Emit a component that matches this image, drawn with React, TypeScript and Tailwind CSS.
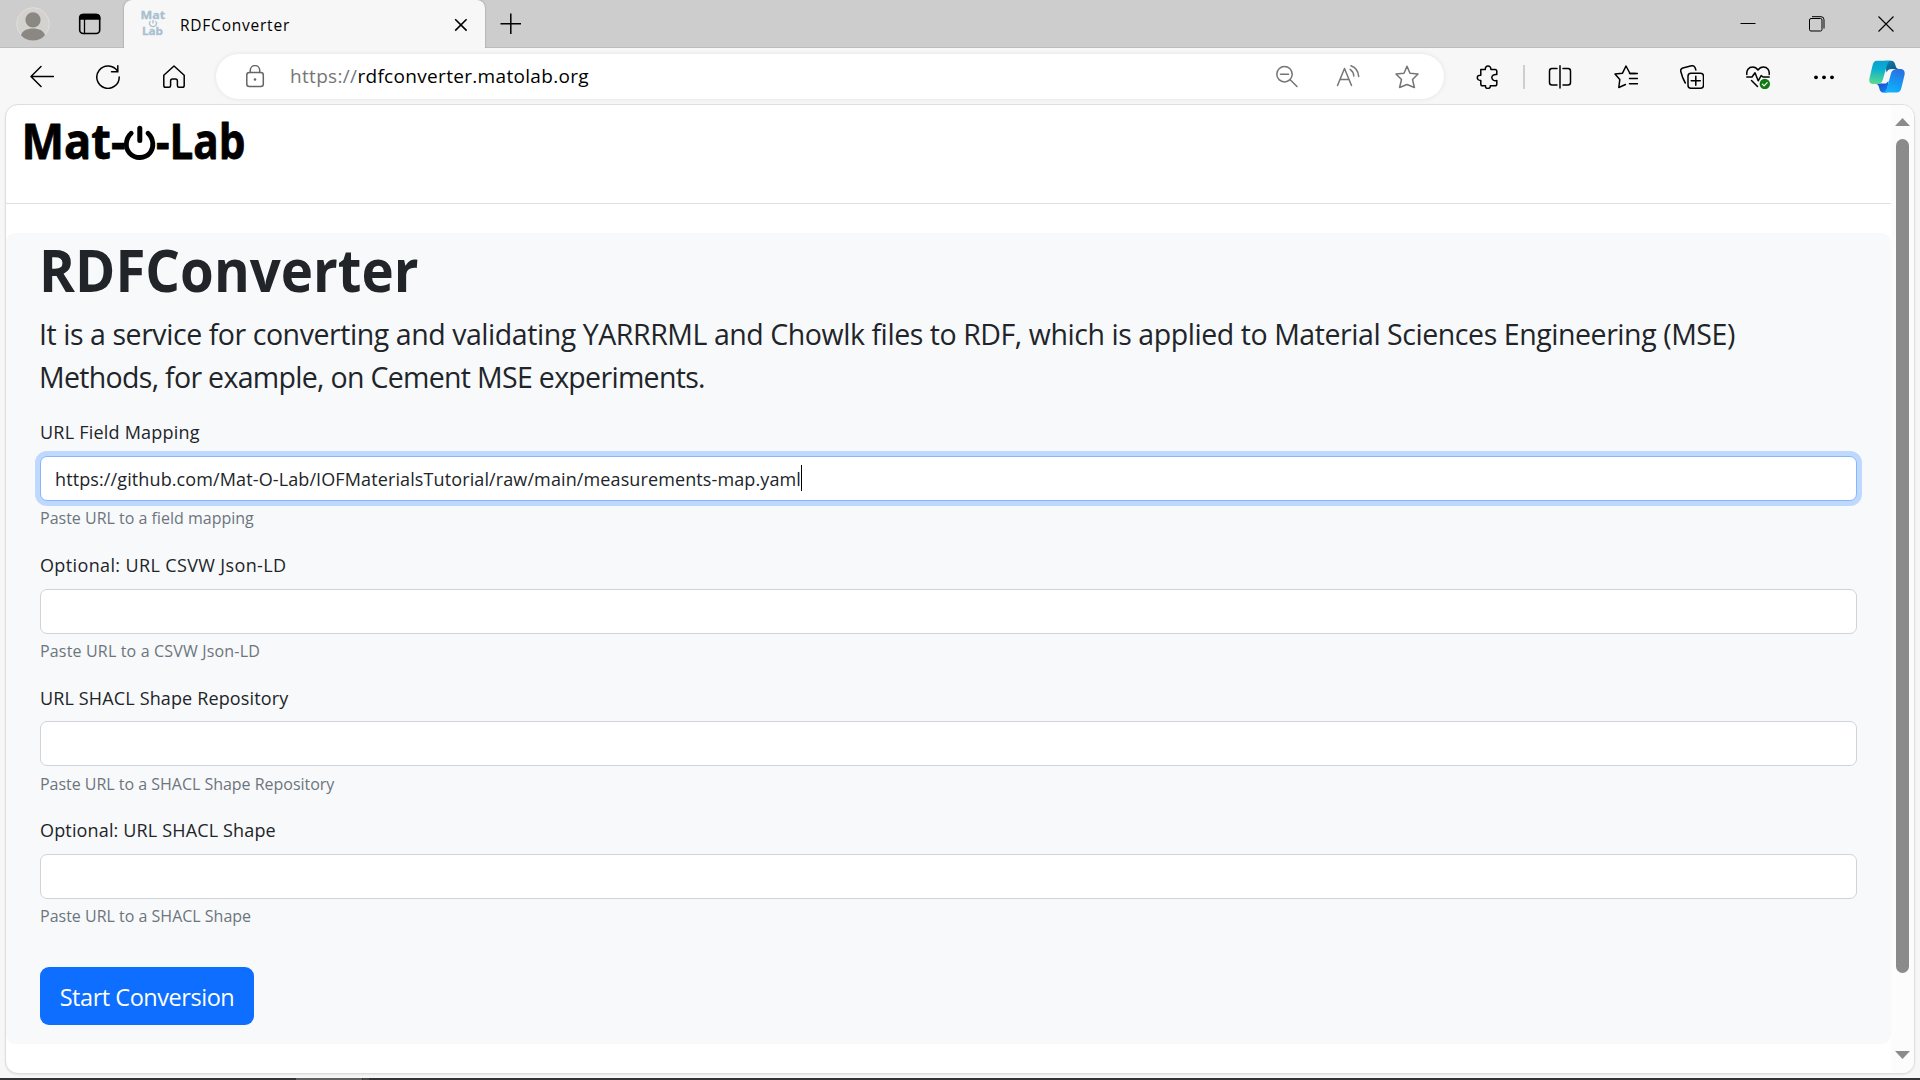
import type { ReactNode } from "react";

function Icon({ children, className = "" }: { children: ReactNode; className?: string }) {
  return (
    <svg
      width="24"
      height="24"
      viewBox="0 0 24 24"
      fill="none"
      stroke="currentColor"
      strokeWidth="1.5"
      strokeLinecap="round"
      strokeLinejoin="round"
      className={"shrink-0 " + className}
    >
      {children}
    </svg>
  );
}

function Cell({ children, className = "w-[66px]" }: { children: ReactNode; className?: string }) {
  return <button className={"flex h-full shrink-0 items-center justify-center " + className}>{children}</button>;
}

function Favicon() {
  return (
    <svg width="26" height="26" viewBox="0 0 26 26" className="shrink-0 overflow-visible" fill="#a9c0cf">
      <text x="0.5" y="8.4" fontSize="11" fontWeight="700" fontFamily="Open Sans" stroke="#a9c0cf" strokeWidth="0.3" textLength="24.5" lengthAdjust="spacingAndGlyphs">Mat</text>
      <text x="2" y="24.4" fontSize="11" fontWeight="700" fontFamily="Open Sans" stroke="#a9c0cf" strokeWidth="0.3" textLength="21" lengthAdjust="spacingAndGlyphs">Lab</text>
      <path d="M10.6 10.2a3.6 3 0 1 0 4.8 0M13 9v3.6" fill="none" stroke="#a9c0cf" strokeWidth="1.3" />
    </svg>
  );
}

function Logo() {
  return (
    <svg width="226" height="60" viewBox="0 0 226 60" className="block overflow-visible">
      <g fontFamily="Open Sans" fontWeight="700" fontSize="48" fill="#000" stroke="#000" strokeWidth="0.8" strokeLinejoin="round">
        <text x="1.5" y="46.2" textLength="104" lengthAdjust="spacingAndGlyphs">Mat-</text>
        <text x="136" y="46.2" textLength="89.5" lengthAdjust="spacingAndGlyphs">-Lab</text>
      </g>
      <path d="M111.2 20.2C105.5 25.5 104.8 34.5 109.3 39.8C115 46.2 125.2 46 130.3 39.5C134.3 34.2 133.6 25.5 128 20.2" fill="none" stroke="#000" strokeWidth="4.8" strokeLinecap="round" />
      <path d="M119.8 15.3V27.5" stroke="#000" strokeWidth="5" strokeLinecap="round" />
    </svg>
  );
}

function Copilot() {
  return (
    <svg width="36" height="33" viewBox="0 0 36 33" className="shrink-0">
      <defs>
        <linearGradient id="teal" x1="0.4" y1="0" x2="0.3" y2="1">
          <stop offset="0" stopColor="#08a3cf" />
          <stop offset="0.35" stopColor="#0aaed0" />
          <stop offset="1" stopColor="#5bdc8c" />
        </linearGradient>
        <linearGradient id="azure" x1="0.7" y1="0" x2="0.3" y2="1">
          <stop offset="0" stopColor="#2a6fe0" />
          <stop offset="0.6" stopColor="#149cf5" />
          <stop offset="1" stopColor="#12b4fb" />
        </linearGradient>
        <linearGradient id="deep" x1="0" y1="0" x2="1" y2="1">
          <stop offset="0" stopColor="#0b85b8" />
          <stop offset="1" stopColor="#134a70" />
        </linearGradient>
        <linearGradient id="navy" x1="0" y1="0" x2="0.6" y2="1">
          <stop offset="0" stopColor="#1f3fc4" />
          <stop offset="1" stopColor="#1679ea" />
        </linearGradient>
      </defs>
      <path d="M16 .8H22C25 .8 25.8 3 26.5 5.5C27 7.6 28 9 30 9H23C20 9 18.5 10 17.5 12.5Z" fill="url(#deep)" />
      <path d="M9 23.5H17L19.5 21L18 32.5H14C11.5 32.5 10.7 30 10.2 28C9.6 25.6 9 24.2 6.5 23.8Z" fill="url(#navy)" />
      <path d="M8 .8H21.5C19 1.5 18.3 4 17.6 6.6L14.2 18.5C13.2 22 12.2 24 8.5 24H4C.8 24-.2 21.4.5 18L3.5 5.5C4.3 2.4 5.2.8 8 .8Z" fill="url(#teal)" />
      <path d="M28.5 9H31.5C35 9 36.2 11.6 35.5 15L32.5 27.5C31.7 30.8 30.5 32.5 27.5 32.5H13.8C16.5 32 17.5 29.5 18.3 26.8L21.7 14.5C22.6 11.2 24 9 28.5 9Z" fill="url(#azure)" />
    </svg>
  );
}

function TabBar() {
  return (
    <div className="flex h-12 shrink-0 items-stretch bg-[#cdcdcd]">
      <div className="flex w-[124px] items-center border-b border-[#bdbdbd] pl-4">
        <svg width="34" height="34" viewBox="0 0 34 34" className="shrink-0">
          <circle cx="17" cy="17" r="16.3" fill="#d3d2cf" stroke="#e0dfdb" strokeWidth="1" />
          <circle cx="17" cy="12.8" r="7.6" fill="#8b8883" />
          <path d="M5 28.2C6.5 23.5 11 21.5 17 21.5S27.5 23.5 29 28.2A16 16 0 0 1 5 28.2Z" fill="#8b8883" />
        </svg>
        <Icon className="ml-[27px]">
          <rect x="2.7" y="2.5" width="20" height="19" rx="3.5" strokeWidth="1.6" />
          <path d="M2.7 7V6Q2.7 2.5 6.2 2.5H19.2Q22.7 2.5 22.7 6V7Z" fill="currentColor" />
          <path d="M7.5 7V21.5" strokeWidth="1.3" />
        </Icon>
      </div>
      <div className="flex w-[361px] items-center rounded-t-[8px] bg-[#f7f7f7] pr-[12px] pl-[16px] shadow-[0_0_2px_rgba(0,0,0,0.35)] [clip-path:inset(-3px_-3px_0_-3px)]">
        <Favicon />
        <span className="ml-[14px] pt-px text-[15.5px] leading-5 tracking-[0.77px]">RDFConverter</span>
        <svg width="24" height="24" viewBox="0 0 24 24" className="ml-auto shrink-0" fill="none" stroke="#000" strokeWidth="1.6">
          <path d="M6.2 7.2 17.6 18.6M17.6 7.2 6.2 18.6" />
        </svg>
      </div>
      <div className="flex flex-1 items-center border-b border-[#bdbdbd] pl-[14px]">
        <svg width="24" height="24" viewBox="0 0 24 24" fill="none" stroke="#000" strokeWidth="1.5">
          <path d="M11.8 1.5V22M1.5 11.8H22" />
        </svg>
        <div className="ml-auto flex items-center">
          <Cell className="w-[69px]">
            <svg width="16" height="16" stroke="#000"><path d="M.5 7.5H15.5" /></svg>
          </Cell>
          <Cell className="w-[69px]">
            <svg width="16" height="16" viewBox="0 0 16 16" fill="none" stroke="#000" strokeWidth="1">
              <rect x=".5" y="2.5" width="12.5" height="12.5" rx="1.5" />
              <path d="M3 .7H12Q15 .7 15 3.7V12.5" />
            </svg>
          </Cell>
          <Cell className="w-[69px]">
            <svg width="16" height="16" viewBox="0 0 16 16" fill="none" stroke="#000" strokeWidth="1.1"><path d="M.5.5 15.5 15.5M15.5.5.5 15.5" /></svg>
          </Cell>
        </div>
      </div>
    </div>
  );
}

function AddressBar() {
  return (
    <div className="flex h-[45px] w-[1228px] shrink-0 items-center rounded-full bg-white shadow-[0_0_5px_rgba(0,0,0,0.09)]">
      <Icon className="ml-[27px] text-[#666]">
        <rect x="3.8" y="7.5" width="16.5" height="14" rx="2.5" />
        <path d="M7.3 7.5V5.3a4.7 4.7 0 0 1 9.4 0V7.5" />
        <circle cx="12" cy="14.5" r="1.3" fill="currentColor" stroke="none" />
      </Icon>
      <span className="ml-[23px] text-[19px] leading-[45px] tracking-[0.32px] text-black">
        <span className="text-[#767676]">https://</span>rdfconverter.matolab.org
      </span>
      <div className="ml-auto flex h-full items-center pr-[7px] text-[#757575]">
        <Cell className="w-[60px]">
          <Icon>
            <circle cx="9.5" cy="9.2" r="7.7" />
            <path d="M5.5 9.2H13.5M15.2 14.8 22 21.5" />
          </Icon>
        </Cell>
        <Cell className="w-[60px]">
          <Icon className="ml-px">
            <path d="M1.5 20.5 8.5 3.5 15.5 20.5M4 14.5H13" />
            <path d="M14.2 4.3C16.3 5.8 17.6 8 17.8 11M15 .8C19.5 2.5 22.4 6.5 22.7 11.5" />
          </Icon>
        </Cell>
        <Cell className="w-[60px]">
          <Icon>
            <path d="M12 1.3 15 8.2 23 9 17.5 14.5 19.4 22.5 12 19.5 4.6 22.5 6.5 14.5 1 9 9 8.2Z" />
          </Icon>
        </Cell>
      </div>
    </div>
  );
}

function Toolbar() {
  return (
    <div className="flex h-[57px] shrink-0 items-center bg-[#f7f7f7] pl-[9px]">
      <Cell>
        <Icon><path d="M23.5 11.5H1M11 1.5 1 11.5 11 21.5" /></Icon>
      </Cell>
      <Cell>
        <Icon><path d="M21.5 6.2A11.2 11.2 0 1 0 23.2 12M21.8.8V6.8H15.5" strokeLinejoin="miter" /></Icon>
      </Cell>
      <Cell>
        <Icon><path d="M12 1 1.8 10.3V20.5Q1.8 22.3 3.5 22.3H7Q8.6 22.3 8.6 20.5V16Q8.6 14 10.5 14H13.5Q15.4 14 15.4 16V20.5Q15.4 22.3 17 22.3H20.5Q22.2 22.3 22.2 20.5V10.3Z" /></Icon>
      </Cell>
      <div className="ml-[9px]">
        <AddressBar />
      </div>
      <div className="flex h-full items-center pl-[11px] text-black">
        <Cell>
          <Icon>
            <path d="M4.8 4.4H9.3C9.1 2.2 10.3 1.1 12 1.1S15.1 2.2 14.9 4.4H19Q20.8 4.4 20.8 6.200V9.600C18 9.200 15.800 10.400 15.800 12.600S18 16 20.800 15.600V18.900Q20.800 20.700 19 20.700H14.300C14.500 22.400 13.500 23.400 11.800 23.400S9.300 22.400 9.500 20.700H6.500Q4.800 20.700 4.800 18.900V15.400C2.900 15.600 1.300 14.400 1.300 12.700S2.900 10 4.800 10.200Z" />
          </Icon>
        </Cell>
        <div className="mx-[2px] h-6 w-[2px] bg-[#cfcfcf]" />
        <Cell className="w-[65px]">
          <Icon>
            <path d="M9 3.5H4Q1.5 3.5 1.5 6V17.5Q1.5 20 4 20H9M15 3.5H20Q22.5 3.5 22.5 6V17.5Q22.5 20 20 20H15M12 .8V23" />
          </Icon>
        </Cell>
        <Cell className="w-[67px]">
          <Icon>
            <path d="M21.5 8.5H16L12 1 8.5 8.2 1 9 5.8 14.5 4.8 22.5 11.5 19.5" />
            <path d="M15.5 8.5H23.5M15.5 13.5H23.5M15.5 18.7H23.5" />
          </Icon>
        </Cell>
        <Cell>
          <Icon>
            <rect x="8" y="8.2" width="15.5" height="15" rx="3" />
            <path d="M15.8 11.2V20.3M11.2 15.7H20.3" />
            <path d="M5.3 18C3.8 15.5 1.5 9.5.8 6.5Q.2 3.8 2.8 3L11.5.8Q14 .3 15 2.5L15.9 5" />
          </Icon>
        </Cell>
        <Cell>
          <Icon>
            <path d="M.8 9.5C.3 5 3 2 6.5 2 9 2 10.7 3 12 5 13.3 3 15 2 17.5 2 21 2 23.7 5 23.2 9.5" />
            <path d="M.8 12H6L9 7.8 12.2 15.8 15.2 10.5 17 12H23.2M5.5 15.5 11.5 21.5" />
            <circle cx="18.8" cy="19" r="5.2" fill="#0f7b10" stroke="none" />
            <path d="M16.4 19.2 18.1 20.9 21.2 17.6" stroke="#fff" strokeWidth="1.2" />
          </Icon>
        </Cell>
        <Cell>
          <Icon>
            <g fill="currentColor" stroke="none">
              <circle cx="4" cy="12.3" r="1.9" />
              <circle cx="12" cy="12.3" r="1.9" />
              <circle cx="20" cy="12.3" r="1.9" />
            </g>
          </Icon>
        </Cell>
        <Cell className="w-[60px]">
          <Copilot />
        </Cell>
      </div>
    </div>
  );
}

type FieldData = {
  label: string;
  labelTracking: string;
  help: string;
  helpTracking: string;
  value?: string;
};

const fields: FieldData[] = [
  {
    label: "URL Field Mapping",
    labelTracking: "tracking-[0.22px]",
    help: "Paste URL to a field mapping",
    helpTracking: "tracking-[0px]",
    value: "https://github.com/Mat-O-Lab/IOFMaterialsTutorial/raw/main/measurements-map.yaml",
  },
  {
    label: "Optional: URL CSVW Json-LD",
    labelTracking: "tracking-[0.37px]",
    help: "Paste URL to a CSVW Json-LD",
    helpTracking: "tracking-[0.17px]",
  },
  {
    label: "URL SHACL Shape Repository",
    labelTracking: "tracking-[0.14px]",
    help: "Paste URL to a SHACL Shape Repository",
    helpTracking: "tracking-[-0.02px]",
  },
  {
    label: "Optional: URL SHACL Shape",
    labelTracking: "tracking-[0.15px]",
    help: "Paste URL to a SHACL Shape",
    helpTracking: "tracking-[0px]",
  },
];

function Field({ field }: { field: FieldData }) {
  const box = field.value
    ? "border-[#86b7fe] shadow-[0_0_0_5px_#bfd8fd]"
    : "border-[#ced4da]";
  return (
    <div className="h-[132.67px]">
      <label className={"block text-[18px] leading-[27px] " + field.labelTracking}>{field.label}</label>
      <div className={"mt-[9.6px] flex h-[45px] items-center rounded-[7px] border bg-white px-[14px] " + box}>
        {field.value && (
          <>
            <span className="pt-[2px] text-[18px] leading-[27px] tracking-[0.112px] whitespace-nowrap">{field.value}</span>
            <span className="h-[26px] w-px bg-black" />
          </>
        )}
      </div>
      <p className={"mt-[5.5px] text-[16px] leading-6 text-[#6c757d] " + field.helpTracking}>{field.help}</p>
    </div>
  );
}

function Scrollbar() {
  return (
    <div className="flex w-[23px] shrink-0 flex-col items-center bg-[#fcfcfc]">
      <svg width="15" height="8" viewBox="0 0 15 8" className="mt-[13px] shrink-0"><path d="M0 8 7.5 0 15 8Z" fill="#8b8b8b" /></svg>
      <div className="mt-[13px] h-[834px] w-[13px] shrink-0 rounded-full bg-[#8b8b8b]" />
      <svg width="15" height="8" viewBox="0 0 15 8" className="mt-auto mb-[14px] shrink-0"><path d="M0 0H15L7.5 8Z" fill="#8b8b8b" /></svg>
    </div>
  );
}

export default function App() {
  return (
    <div className="flex h-[1080px] w-[1920px] flex-col overflow-hidden bg-[#f7f7f7] font-['Open_Sans',sans-serif] text-black">
      <TabBar />
      <Toolbar />
      <div className="mx-[5px] -mt-px flex h-[970px] w-[1910px] shrink-0 overflow-hidden rounded-[13px] border border-[#dedede] bg-white shadow-[0_1px_2px_rgba(0,0,0,0.08)]">
        <main className="flex-1 text-[#212529]">
          <header className="h-[99px] border-b border-[#dee0e2] pt-[8px] pl-[14px]">
            <Logo />
          </header>
          <section className="mt-[29px] h-[811px] rounded-[9px] bg-[#f8f9fb] px-[34px]">
            <h1 className="-ml-px w-fit origin-left scale-x-[0.928] pt-px text-[58.8px] leading-[70px] font-bold">RDFConverter</h1>
            <p className="mt-[9px] -ml-px text-[28.5px] leading-[43px] whitespace-nowrap">
              <span className="block tracking-[-0.438px]">
                It is a service for converting and validating YARRRML and Chowlk files to RDF, which is applied to Material Sciences Engineering (MSE)
              </span>
              <span className="block tracking-[-0.685px]">Methods, for example, on Cement MSE experiments.</span>
            </p>
            <form className="mt-[20.4px]">
              {fields.map((field) => (
                <Field key={field.label} field={field} />
              ))}
              <button type="button" className="mt-[17px] h-[58px] w-[214px] rounded-[9px] bg-[#0d6eff] pt-[3px] text-[23.5px] leading-none tracking-[-0.46px] whitespace-nowrap text-white">
                Start Conversion
              </button>
            </form>
          </section>
        </main>
        <Scrollbar />
      </div>
      <div className="mt-auto flex h-[2px] shrink-0 bg-[#333437]">
        <div className="ml-[296px] w-[66px] bg-[#606162]" />
        <div className="ml-px w-[6px] bg-[#48494b]" />
      </div>
    </div>
  );
}
